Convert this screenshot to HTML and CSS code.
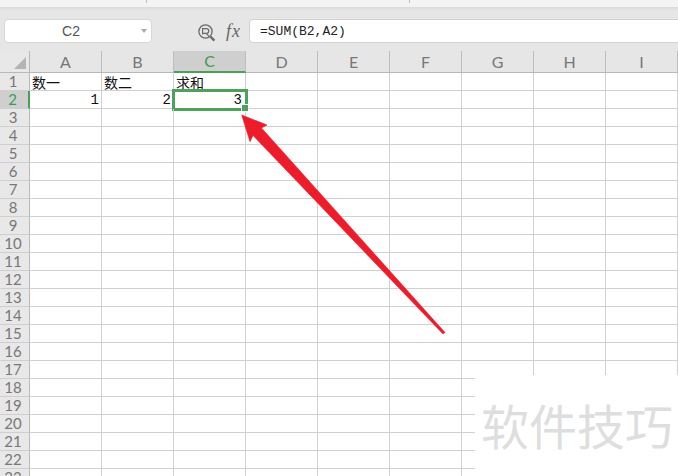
FILE: index.html
```html
<!DOCTYPE html>
<html lang="zh">
<head>
<meta charset="utf-8">
<title>求和</title>
<link rel="stylesheet" href="styles.css">
</head>
<body>
<div class="ribbon"><i class="tick t1"></i><i class="tick t2"></i></div>
<div class="fbar">
  <div class="namebox"><span class="name">C2</span><span class="caret"></span></div>
  <svg class="zoom" width="18" height="18" viewBox="0 0 18 18" fill="none" stroke="#6a6a6a"><circle cx="7.5" cy="7.5" r="6.6" stroke-width="1.3"/><path d="M4.6 10.5V4.6H8.4A2.4 2.4 0 0 1 8.4 9.4H4.6M8 9.4L11.4 12.6" stroke-width="1.2"/><path d="M12.4 12.6l4 4" stroke-width="2.2"/></svg>
  <span class="fx">fx</span>
  <div class="finput">=SUM(B2,A2)</div>
</div>
<div class="sheet">
  <div class="row head"><div class="rh corner"><span class="tri"></span></div><div class="c">A</div><div class="c">B</div><div class="c on">C</div><div class="c">D</div><div class="c">E</div><div class="c">F</div><div class="c">G</div><div class="c">H</div><div class="c">I</div></div>
  <div class="row"><div class="rh">1</div><div class="c">数一</div><div class="c">数二</div><div class="c">求和</div><div class="c"></div><div class="c"></div><div class="c"></div><div class="c"></div><div class="c"></div><div class="c"></div></div>
  <div class="row"><div class="rh on">2</div><div class="c n">1</div><div class="c n">2</div><div class="c n sel">3<span class="handle"></span></div><div class="c"></div><div class="c"></div><div class="c"></div><div class="c"></div><div class="c"></div><div class="c"></div></div>
  <div class="row"><div class="rh">3</div><div class="c"></div><div class="c"></div><div class="c"></div><div class="c"></div><div class="c"></div><div class="c"></div><div class="c"></div><div class="c"></div><div class="c"></div></div>
  <div class="row"><div class="rh">4</div><div class="c"></div><div class="c"></div><div class="c"></div><div class="c"></div><div class="c"></div><div class="c"></div><div class="c"></div><div class="c"></div><div class="c"></div></div>
  <div class="row"><div class="rh">5</div><div class="c"></div><div class="c"></div><div class="c"></div><div class="c"></div><div class="c"></div><div class="c"></div><div class="c"></div><div class="c"></div><div class="c"></div></div>
  <div class="row"><div class="rh">6</div><div class="c"></div><div class="c"></div><div class="c"></div><div class="c"></div><div class="c"></div><div class="c"></div><div class="c"></div><div class="c"></div><div class="c"></div></div>
  <div class="row"><div class="rh">7</div><div class="c"></div><div class="c"></div><div class="c"></div><div class="c"></div><div class="c"></div><div class="c"></div><div class="c"></div><div class="c"></div><div class="c"></div></div>
  <div class="row"><div class="rh">8</div><div class="c"></div><div class="c"></div><div class="c"></div><div class="c"></div><div class="c"></div><div class="c"></div><div class="c"></div><div class="c"></div><div class="c"></div></div>
  <div class="row"><div class="rh">9</div><div class="c"></div><div class="c"></div><div class="c"></div><div class="c"></div><div class="c"></div><div class="c"></div><div class="c"></div><div class="c"></div><div class="c"></div></div>
  <div class="row"><div class="rh">10</div><div class="c"></div><div class="c"></div><div class="c"></div><div class="c"></div><div class="c"></div><div class="c"></div><div class="c"></div><div class="c"></div><div class="c"></div></div>
  <div class="row"><div class="rh">11</div><div class="c"></div><div class="c"></div><div class="c"></div><div class="c"></div><div class="c"></div><div class="c"></div><div class="c"></div><div class="c"></div><div class="c"></div></div>
  <div class="row"><div class="rh">12</div><div class="c"></div><div class="c"></div><div class="c"></div><div class="c"></div><div class="c"></div><div class="c"></div><div class="c"></div><div class="c"></div><div class="c"></div></div>
  <div class="row"><div class="rh">13</div><div class="c"></div><div class="c"></div><div class="c"></div><div class="c"></div><div class="c"></div><div class="c"></div><div class="c"></div><div class="c"></div><div class="c"></div></div>
  <div class="row"><div class="rh">14</div><div class="c"></div><div class="c"></div><div class="c"></div><div class="c"></div><div class="c"></div><div class="c"></div><div class="c"></div><div class="c"></div><div class="c"></div></div>
  <div class="row"><div class="rh">15</div><div class="c"></div><div class="c"></div><div class="c"></div><div class="c"></div><div class="c"></div><div class="c"></div><div class="c"></div><div class="c"></div><div class="c"></div></div>
  <div class="row"><div class="rh">16</div><div class="c"></div><div class="c"></div><div class="c"></div><div class="c"></div><div class="c"></div><div class="c"></div><div class="c"></div><div class="c"></div><div class="c"></div></div>
  <div class="row"><div class="rh">17</div><div class="c"></div><div class="c"></div><div class="c"></div><div class="c"></div><div class="c"></div><div class="c"></div><div class="c"></div><div class="c"></div><div class="c"></div></div>
  <div class="row"><div class="rh">18</div><div class="c"></div><div class="c"></div><div class="c"></div><div class="c"></div><div class="c"></div><div class="c"></div><div class="c"></div><div class="c"></div><div class="c"></div></div>
  <div class="row"><div class="rh">19</div><div class="c"></div><div class="c"></div><div class="c"></div><div class="c"></div><div class="c"></div><div class="c"></div><div class="c"></div><div class="c"></div><div class="c"></div></div>
  <div class="row"><div class="rh">20</div><div class="c"></div><div class="c"></div><div class="c"></div><div class="c"></div><div class="c"></div><div class="c"></div><div class="c"></div><div class="c"></div><div class="c"></div></div>
  <div class="row"><div class="rh">21</div><div class="c"></div><div class="c"></div><div class="c"></div><div class="c"></div><div class="c"></div><div class="c"></div><div class="c"></div><div class="c"></div><div class="c"></div></div>
  <div class="row"><div class="rh">22</div><div class="c"></div><div class="c"></div><div class="c"></div><div class="c"></div><div class="c"></div><div class="c"></div><div class="c"></div><div class="c"></div><div class="c"></div></div>
  <div class="row"><div class="rh">23</div><div class="c"></div><div class="c"></div><div class="c"></div><div class="c"></div><div class="c"></div><div class="c"></div><div class="c"></div><div class="c"></div><div class="c"></div></div>
</div>
<svg class="arrow" width="678" height="476" viewBox="0 0 678 476"><path fill="#ec1c2b" stroke="#ec1c2b" stroke-width="0.6" stroke-linejoin="round" d="M241.7 115L267 125L261.5 128L445 332.5L443 334L253 135.5L250 141.7Z"/></svg>
<div class="mark">软件技巧</div>
</body>
</html>
```
FILE: styles.css
```css
* { box-sizing: border-box; }
html, body { margin: 0; height: 100%; }
body { width: 678px; height: 476px; overflow: hidden; position: relative; background: #fff; font-family: "Liberation Sans", "Noto Sans CJK SC", sans-serif; }

.ribbon { height: 7px; background: #f4f4f4; display: flex; }
.tick { display: block; width: 1px; height: 3px; background: #bbb; }
.t1 { margin-left: 146px; }
.t2 { margin-left: 262px; }

.fbar { height: 44px; padding-top: 12px; background: linear-gradient(#dcdcdc, #e6e6e6 4px); display: flex; align-items: flex-start; border-bottom: 1px solid #e6e6e6; }
.namebox { width: 148px; height: 24px; margin-left: 4px; background: #fff; border: 1px solid #d6d6d6; border-radius: 4px; display: flex; align-items: center; position: relative; }
.name { flex: 1; text-align: center; font-size: 14px; color: #555; padding-right: 14px; }
.caret { position: absolute; right: 4px; top: 9px; border: 3px solid transparent; border-top: 4px solid #aaa; border-bottom: 0; }
.zoom { margin: 5px 0 0 46px; }
.fx { width: 20px; margin: 2px 0 0 10px; font: italic 18px "Liberation Serif", serif; color: #666; letter-spacing: 1px; }
.finput { flex: 1; height: 24px; margin: 0 0 0 3px; background: #fff; border: 1px solid #d2d2d2; border-right: 0; border-radius: 4px 0 0 4px; padding: 4px 0 0 10px; font: 13px/16px "Liberation Mono", "Noto Sans CJK SC", monospace; color: #222; }

.sheet { display: flex; flex-direction: column; }
.row { display: flex; height: 18px; flex: none; }
.head { height: 22px; background: #e6e6e6; }
.rh { width: 30px; flex: none; background: #e8e8e8; border-right: 1px solid #b8b8b8; border-bottom: 1px solid #cfcfcf; font: 15px/17px Lato, "Liberation Sans", sans-serif; color: #777; text-align: center; padding-right: 3px; }
.c { width: 72px; flex: none; border-right: 1px solid #d0d0d0; border-bottom: 1px solid #d0d0d0; font-size: 14px; line-height: 18px; color: #111; padding: 0 2px; white-space: nowrap; position: relative; font-family: "Noto Sans CJK SC", sans-serif; }
.head .c { border-color: #bdbdbd; border-top: 0; font: 16px/21px Lato, "Liberation Sans", sans-serif; color: #777; text-align: center; border-bottom: 1px solid #b8b8b8; }
.head .rh { border-bottom: 1px solid #b8b8b8; }
.head .c.on { background: #cfcfcf; color: #3f9a4f; border-bottom: 2px solid #4aa057; line-height: 20px; }
.corner { position: relative; }
.tri { position: absolute; right: 3px; bottom: 3px; border-style: solid; border-width: 0 0 12px 12px; border-color: transparent transparent #b4b4b4 transparent; }
.rh.on { background: #cfcfcf; color: #3f9a4f; border-right: 2px solid #4aa057; }
.n { text-align: right; font: 14px/18px "Liberation Mono", monospace; }
.sel { outline: 3px solid #4ca25a; outline-offset: -1px; padding-right: 3px; }
.handle { position: absolute; right: -3px; bottom: -3px; width: 6px; height: 6px; background: #4ca25a; outline: 1px solid #fff; z-index: 2; }

.arrow { position: absolute; left: 0; top: 0; pointer-events: none; }
.mark { position: absolute; left: 475px; top: 375px; width: 203px; height: 101px; background: #fff; padding: 19px 0 0 6px; font: 48px/60px "Noto Sans CJK SC", sans-serif; color: #dedede; white-space: nowrap; }
```
